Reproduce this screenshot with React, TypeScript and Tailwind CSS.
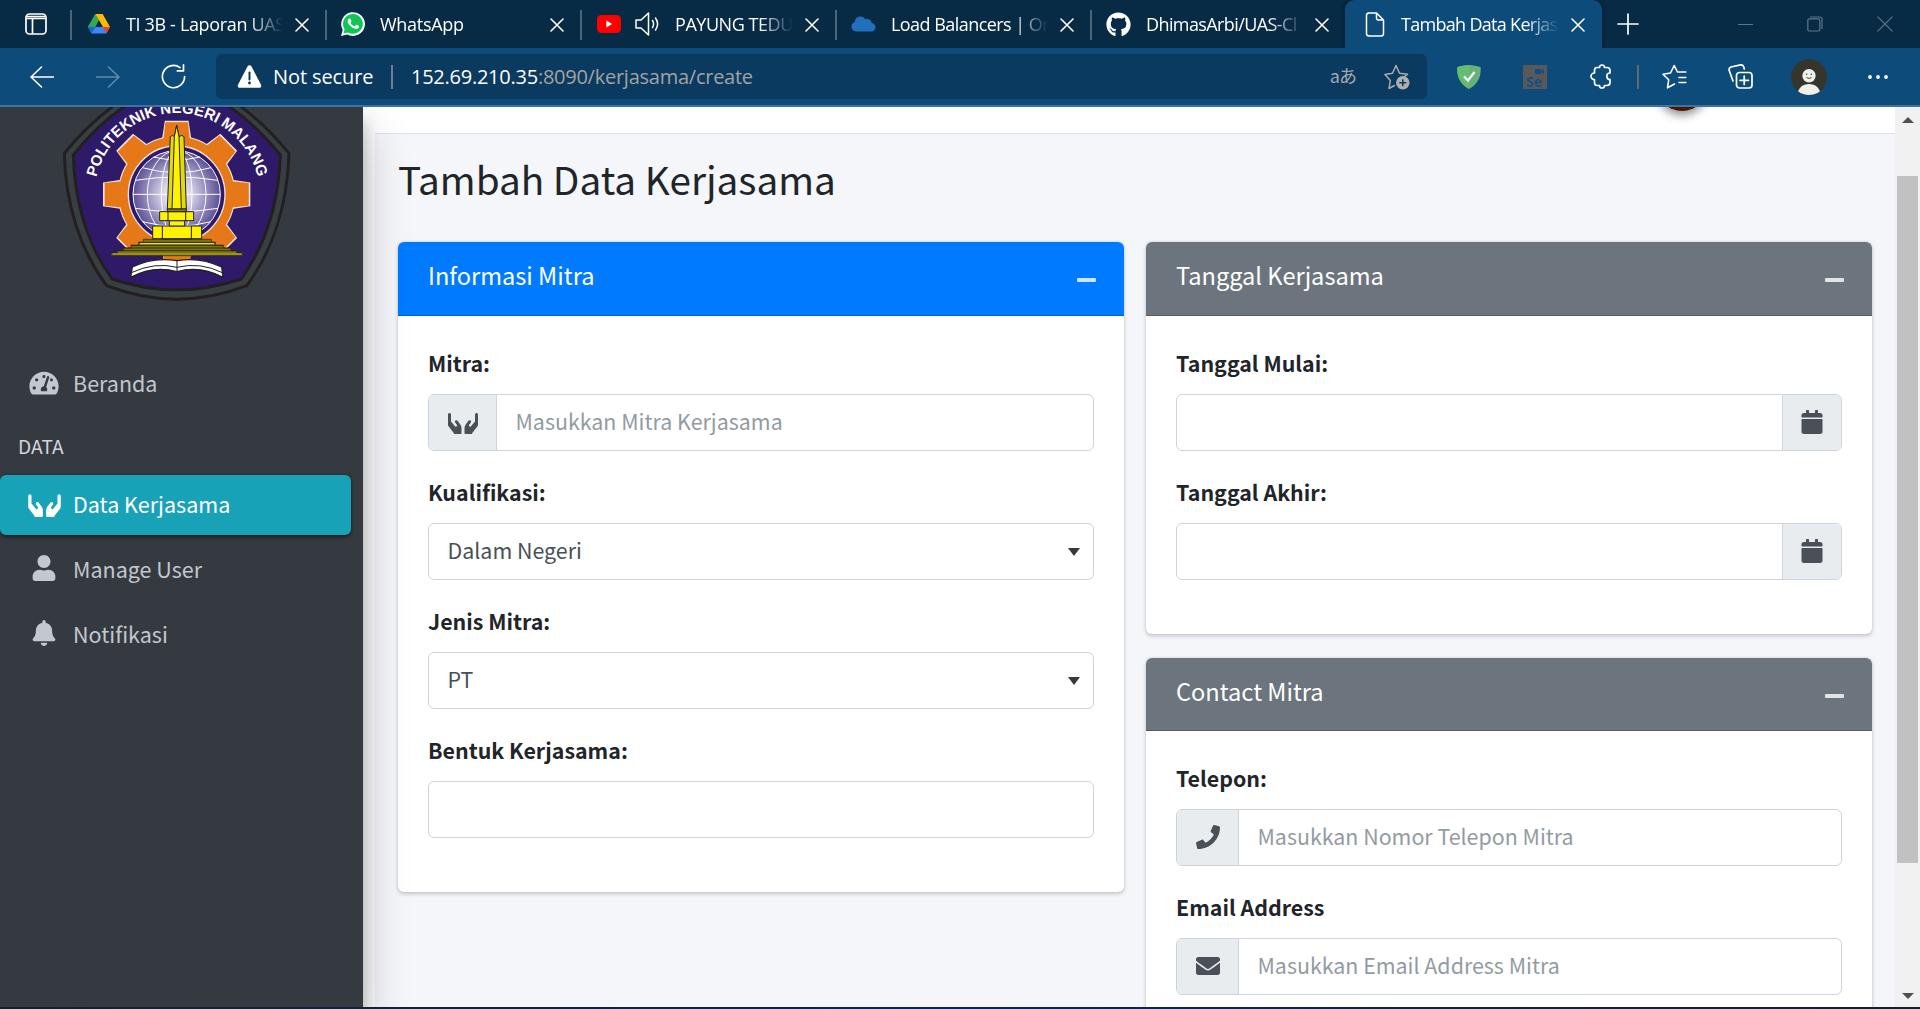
import React from "react";
import type { ReactNode } from "react";
import {
  FaTachometerAlt,
  FaHands,
  FaUser,
  FaBell,
  FaCalendar,
  FaPhone,
  FaEnvelope,
  FaGithub,
} from "react-icons/fa";

/* ---------- Browser chrome icons ---------- */

function Stroke({ w, h, vb, sw = 1.5, className = "", children }: { w: number; h: number; vb: string; sw?: number; className?: string; children: ReactNode }) {
  return (
    <svg width={w} height={h} viewBox={vb} fill="none" stroke="currentColor" strokeWidth={sw} strokeLinecap="round" strokeLinejoin="round" className={"shrink-0 " + className}>
      {children}
    </svg>
  );
}

function CloseX() {
  return (
    <Stroke w={14} h={14} vb="0 0 14 14" sw={1.6} className="text-white">
      <path d="M1 1l12 12M13 1L1 13" />
    </Stroke>
  );
}

function DriveLogo() {
  return (
    <svg width="22" height="20" viewBox="0 0 22 20" className="shrink-0">
      <path d="M7.3 0H14.7L11 6.4Z" fill="#188038" />
      <path d="M7.3 0L0 12.8L3.7 19.4L11 6.5Z" fill="#1ea362" />
      <path d="M14.7 0L7.3 0L14.8 13H22Z" fill="#ffba00" />
      <path d="M7.3 0L11 6.5L7.3 13H0Z" fill="#34a853" />
      <path d="M0 13H22L18.3 19.6H3.7Z" fill="#4285f4" />
      <path d="M0 13L3.7 19.6L7.4 13Z" fill="#1967d2" />
      <path d="M22 13L18.3 19.6L14.6 13Z" fill="#ea4335" />
      <path d="M11 6.5L14.7 13H7.3Z" fill="#072a45" />
    </svg>
  );
}

function WhatsAppLogo() {
  return (
    <svg width="24" height="24" viewBox="0 0 24 24" className="shrink-0">
      <path d="M0 24l1.7-6.1A11.9 11.9 0 1 1 6.2 22.4Z" fill="#fff" />
      <path d="M2.4 21.6l1.2-4.3A9.9 9.9 0 1 1 7 20.5Z" fill="#11c456" />
      <path d="M8.6 6.4c.4 0 .7 0 .9.5l.9 2.1c.1.3 0 .6-.9 1.7 1 1.800 2.300 2.900 4.100 3.700l1.200-1.400c.2-.3.500-.3.800-.2l2.100 1c.4.2.4.4.3 1-.3 1.400-1.600 2.200-2.900 2.200-1 0-3.300-.8-5.100-2.400-1.900-1.700-3.300-3.900-3.400-5.200 0-1.500.9-3 2-3Z" fill="#fff" />
    </svg>
  );
}

function YouTubeLogo() {
  return (
    <svg width="24" height="18" viewBox="0 0 24 18" className="shrink-0">
      <rect width="24" height="18" rx="4.500" fill="#f00" />
      <path d="M9.300 5.400V12.600L15.300 9Z" fill="#fff" />
    </svg>
  );
}

function OracleCloud() {
  return (
    <svg width="25" height="16" viewBox="0 0 25 16" className="shrink-0">
      <path d="M5.500 15.500C2.500 15.500.500 13.300.500 10.600.500 8 2.300 6.300 3.800 6 4 2.700 6.400.500 9.400.500c2.200 0 4 1.200 4.900 2.700C17.600 2.200 20.500 4 20.800 7c2.400.4 3.700 2.200 3.700 4.200 0 2.500-1.700 4.300-4.300 4.300Z" fill="#2170bd" />
    </svg>
  );
}

function Favicon({ kind }: { kind: string }) {
  if (kind === "drive") return <DriveLogo />;
  if (kind === "whatsapp") return <WhatsAppLogo />;
  if (kind === "oracle") return <OracleCloud />;
  if (kind === "youtube")
    return (
      <>
        <YouTubeLogo />
        <Stroke w={27} h={26} vb="0 0 27 26" sw={1.5} className="ml-[14px] text-white">
          <path d="M1 9h5l7.500-7v22L6 17H1Z" />
          <path d="M17.500 9.500q2.200 3.500 0 7M20.500 7q4.200 6 0 12" />
        </Stroke>
      </>
    );
  if (kind === "github") return <FaGithub className="size-[25px] shrink-0 text-white" />;
  return (
    <Stroke w={20} h={25} vb="0 0 20 25" sw={1.500} className="ml-[2px] mr-[2px] text-white">
      <path d="M3 1H11.500L18.500 8V21.500Q18.500 24 16 24H4Q1.500 24 1.500 21.500V3.500Q1.500 1 4 1M11.500 1V6Q11.500 8 13.500 8H18.500" />
    </Stroke>
  );
}

type Tab = { kind: string; title: string; pad: string; gap: string; box: string };

const tabs: Tab[] = [
  { kind: "drive", title: "TI 3B - Laporan UAS", pad: "pl-[18px]", gap: "ml-[16px]", box: "tracking-[-0.35px]" },
  { kind: "whatsapp", title: "WhatsApp", pad: "pl-[16px]", gap: "ml-[15px]", box: "tracking-[-0.3px]" },
  { kind: "youtube", title: "PAYUNG TEDUH", pad: "pl-[17px]", gap: "ml-[13px]", box: "tracking-[-0.45px]" },
  { kind: "oracle", title: "Load Balancers | Ora", pad: "pl-[16px]", gap: "ml-[15px]", box: "tracking-[-0.55px]" },
  { kind: "github", title: "DhimasArbi/UAS-Cl", pad: "pl-[16px]", gap: "ml-[15px]", box: "tracking-[-0.6px]" },
];

function TabTitle({ title, box }: { title: string; box: string }) {
  return (
    <span className={"min-w-0 flex-1 overflow-hidden whitespace-nowrap pb-[1px] text-[18px] leading-[30px] text-white [mask-image:linear-gradient(to_right,black_calc(100%-34px),transparent)] " + box}>
      {title}
    </span>
  );
}

function TabBar() {
  return (
    <div className="flex h-[48px] shrink-0 items-stretch bg-[#072a45]">
      <div className="flex w-[70px] items-center pl-[25px]">
        <Stroke w={22} h={22} vb="0 0 22 22" sw={1.700} className="text-white">
          <rect x="1" y="1" width="20" height="20" rx="3.500" />
          <path d="M1.500 5.500H20.500M2 3.500H20M7.500 6V20.500" />
        </Stroke>
      </div>
      {tabs.map((t) => (
        <div key={t.kind} className={"relative flex w-[255px] items-center pr-[16px] " + t.pad}>
          <span className="absolute left-0 top-[10px] h-[30px] w-[2px] bg-[#4a6478]" />
          <Favicon kind={t.kind} />
          <div className={"flex min-w-0 flex-1 " + t.gap}>
            <TabTitle title={t.title} box={t.box} />
          </div>
          <div className="ml-[12px] flex pt-[2px]"><CloseX /></div>
        </div>
      ))}
      <div className="flex w-[257px] items-center rounded-t-[9px] bg-[#0d4b7a] pl-[18px] pr-[17px] shadow-[0_0_4px_rgba(0,0,0,0.5)]">
        <Favicon kind="page" />
        <div className="ml-[14px] flex min-w-0 flex-1">
          <TabTitle title="Tambah Data Kerjasama" box="tracking-[-0.7px]" />
        </div>
        <div className="ml-[12px] flex pt-[2px]"><CloseX /></div>
      </div>
      <div className="flex flex-1 items-center justify-between pl-[15px] pr-[27px]">
        <Stroke w={22} h={22} vb="0 0 22 22" sw={1.700} className="text-white">
          <path d="M11 1V21M1 11H21" />
        </Stroke>
        <div className="flex items-center gap-[54px] text-[#5f7587]">
          <Stroke w={15} h={16} vb="0 0 15 16" sw={1}><path d="M0 8.500H15" /></Stroke>
          <Stroke w={16} h={16} vb="0 0 16 16" sw={1.200}>
            <rect x="0.800" y="2.800" width="12" height="12.200" rx="1.500" />
            <path d="M3.500 1H13Q15 1 15 3V12.500" />
          </Stroke>
          <Stroke w={16} h={16} vb="0 0 16 16" sw={1.200}><path d="M0.800 0.800l14.400 14.400M15.200 0.800L0.800 15.200" /></Stroke>
        </div>
      </div>
    </div>
  );
}

function Toolbar() {
  return (
    <div className="flex h-[59px] shrink-0 items-center border-b-2 border-[#3f739e] bg-[#0d4b7a] pl-[30px] text-white">
      <Stroke w={24} h={22} vb="0 0 24 22" sw={1.600}><path d="M11.500 1L1 11L11.500 21M1.500 11H23.500" /></Stroke>
      <Stroke w={24} h={22} vb="0 0 24 22" sw={1.600} className="ml-[42px] text-[#6289a8]"><path d="M12.500 1L23 11L12.500 21M22.500 11H0.500" /></Stroke>
      <Stroke w={25} h={25} vb="0 0 25 25" sw={1.700} className="ml-[41px]">
        <path d="M23.600 12.500A11.100 11.100 0 1 1 19 3.600M22.500 0.900V6.800H16.300" />
      </Stroke>
      <div className="ml-[30px] flex h-[45px] w-[1211px] items-center rounded-[6px] bg-[#0a3a5f] pl-[21px] pr-[17px]">
        <svg width="25" height="23" viewBox="0 0 25 23" className="shrink-0">
          <path d="M10.600 1.300a2.200 2.200 0 0 1 3.800 0l9.600 18.500c.8 1.500-.1 3-1.800 3H2.800c-1.700 0-2.600-1.500-1.800-3Z" fill="#fff" />
          <path d="M12.500 7.500V14.500" stroke="#0a3a5f" strokeWidth="2" strokeLinecap="round" />
          <circle cx="12.500" cy="18" r="1.400" fill="#0a3a5f" />
        </svg>
        <span className="ml-[11px] w-[101px] whitespace-nowrap text-[20px] leading-[28px] tracking-[-0.1px]">Not secure</span>
        <span className="ml-[17px] h-[24px] w-[2px] bg-[#6b8193]" />
        <span className="ml-[18px] whitespace-nowrap text-[20px] leading-[28px] tracking-[-0.25px]">
          152.69.210.35<span className="text-[#a3a3a3]">:8090/kerjasama/create</span>
        </span>
        <span className="ml-auto pb-[3px] font-['Noto_Sans_CJK_JP',sans-serif] text-[18px] leading-[24px] tracking-[-1px] text-[#a3a8ab]">aあ</span>
        <svg width="26" height="26" viewBox="0 0 26 26" className="ml-[28px] shrink-0" fill="none">
          <path d="M10.500 21.500L5 24.500L6.300 16.500L1 10.500L8.500 9.200L12 1.500L15.500 9.200L23.500 10.300L20.500 12.500" stroke="#a9adaf" strokeWidth="1.500" strokeLinejoin="round" strokeLinecap="round" />
          <circle cx="18.800" cy="18.800" r="6.700" fill="#b0b0b0" />
          <path d="M18.800 15.300V22.300M15.300 18.800H22.300" stroke="#0a3a5f" strokeWidth="1.500" />
        </svg>
      </div>
      <svg width="24" height="24" viewBox="0 0 24 24" className="ml-[30px] shrink-0">
        <path d="M12 0C8.500 0 4 1 .300 2.200 0 10 1.500 18 12 24 22.500 18 24 10 23.700 2.200 20 1 15.500 0 12 0Z" fill="#67b279" />
        <path d="M12 0C8.500 0 4 1 .300 2.200 0 10 1.500 18 12 24Z" fill="#68bc71" />
        <path d="M7 11.500L11 15.500L17.500 7" stroke="#fff" strokeWidth="2.200" fill="none" />
      </svg>
      <div className="ml-[42px] flex h-[24px] w-[24px] shrink-0 flex-col items-end justify-between bg-[#57585a]">
        <svg width="9" height="5" viewBox="0 0 9 5" className="mr-[3px] mt-[4px]"><path d="M0 0H6V1.500L9 0V5L6 3.500V5H0Z" fill="#14507f" /></svg>
        <span className="mb-[1px] mr-[5px] text-[14px] font-bold leading-[13px] text-[#14507f]">Se</span>
      </div>
      <Stroke w={24} h={25} vb="0 0 24 25" sw={1.700} className="ml-[43px]">
        <path d="M7 3.500H9.500C9.500 2 10.500 1 12 1S14.500 2 14.500 3.500H17Q20 3.500 20 6.500V9C18 9 16.800 10.500 16.800 12.200S18 15.500 20 15.500V18.500Q20 21.500 17 21.500H14.500C14.500 23 13.500 24 12 24S9.500 23 9.500 21.500H7Q4.500 21.500 4.500 18.500V15.500C2.500 15.500 1 14 1 12.300S2.500 9 4.500 9V6.500Q4.500 3.500 7 3.500Z" />
      </Stroke>
      <span className="ml-[23px] h-[24px] w-[2px] shrink-0 bg-[#66696c]" />
      <Stroke w={25} h={25} vb="0 0 25 25" sw={1.600} className="ml-[23px]">
        <path d="M12.500 20L5.500 23.800L6.700 15.800L1 10.200L8.500 9L12.200 1.500L15.500 8H23.800M17 13.500H23.800M17 18.500H23.800" />
      </Stroke>
      <Stroke w={25} h={25} vb="0 0 25 25" sw={1.700} className="ml-[41px]">
        <rect x="8.500" y="8.500" width="15.500" height="15.500" rx="3" />
        <path d="M16.200 12V20.500M12 16.300H20.500M5 17L1.200 6.500Q.500 4 3 3L12.500.9Q15 .500 15.800 3L16.300 5" />
      </Stroke>
      <svg width="36" height="36" viewBox="0 0 36 36" className="ml-[38px] shrink-0">
        <circle cx="18" cy="18" r="18" fill="#35352b" />
        <path d="M7 32.200Q10 25 18 25T29 32.200A18 18 0 0 1 7 32.200Z" fill="#efefeb" />
        <circle cx="18" cy="16.700" r="6.700" fill="#efefeb" />
        <circle cx="15.700" cy="15.300" r="0.700" fill="#35352b" />
        <circle cx="20.300" cy="15.300" r="0.700" fill="#35352b" />
        <path d="M15.500 18.500Q18 20.500 20.500 18.500" stroke="#35352b" strokeWidth="0.900" fill="none" />
      </svg>
      <svg width="20" height="4" viewBox="0 0 20 4" className="ml-[41px] shrink-0" fill="#fff">
        <circle cx="2" cy="2" r="1.900" /><circle cx="10" cy="2" r="1.900" /><circle cx="18" cy="2" r="1.900" />
      </svg>
    </div>
  );
}

/* ---------- Sidebar ---------- */

const TEETH = [0, 45, 90, 135, 180, 225, 270, 315];

function CampusLogo() {
  return (
    <svg width="323" height="213" viewBox="0 51 969 639" className="ml-[40px] block shrink-0">
      <defs>
        <radialGradient id="globe">
          <stop offset="0" stopColor="#ffffff" />
          <stop offset="0.350" stopColor="#d5d0e6" />
          <stop offset="1" stopColor="#5a4f97" />
        </radialGradient>
        <path id="ring" d="M163 317A248 248 0 0 1 659 317" />
      </defs>
      <path d="M73 190Q220 10 410 -50Q600 10 747 190C742 340 700 480 620 587Q410 668 200 587C120 480 76 340 73 190Z" fill="#383f42" stroke="#231f20" strokeWidth="9" />
      <path d="M100 195Q235 25 410 -25Q585 25 721 195C716 340 680 460 604 567Q410 632 216 567C140 460 104 340 100 195Z" fill="#2e1a69" stroke="#231f20" strokeWidth="9" />
      <text fill="#fff" fontSize="46" fontWeight="bold" fontFamily="'Liberation Sans', Arial, sans-serif">
        <textPath href="#ring" startOffset="50%" textAnchor="middle" textLength="668" lengthAdjust="spacingAndGlyphs">POLITEKNIK NEGERI MALANG</textPath>
      </text>
      <g transform="translate(410 313)">
        {TEETH.map((a) => (
          <path key={a} d="M-41 -165L-33 -218H33L41 -165Z" transform={`rotate(${a})`} fill="#e77817" stroke="#f3e3e0" strokeWidth="6" />
        ))}
        <circle r="173" fill="none" stroke="#f3e3e0" strokeWidth="6" />
        {TEETH.map((a) => (
          <path key={a} d="M-41 -150L-34 -216H34L41 -150Z" transform={`rotate(${a})`} fill="#e77817" />
        ))}
        <circle r="173" fill="#e77817" />
        <circle r="145" fill="#2e1a69" stroke="#f3e3e0" strokeWidth="4" />
        <circle r="131" fill="url(#globe)" stroke="#fff" strokeWidth="3" />
        <g fill="none" stroke="#fff" strokeWidth="3">
          <ellipse rx="88" ry="131" />
          <ellipse rx="46" ry="131" />
          <path d="M-131 0H131M-123 -42Q0 -62 123 -42M-103 -80Q0 -50 103 -80M-70 -112Q0 -95 70 -112M-124 42Q0 62 124 42M-103 82Q0 110 103 82" />
        </g>
      </g>
      <path d="M370 498H452V506Q430 506 411 512Q390 506 370 506Z" fill="#e77817" />
      <g stroke="#231f20" strokeWidth="3" strokeLinejoin="round">
        <path d="M310 448H514V457H526V466H550V474H573V482H590V489H608V497H213V489H232V482H250V474H273V466H296V457H310Z" fill="#7d740f" strokeWidth="2" />
        <path d="M296 457H526M273 466H550M250 474H573M232 482H590" fill="none" strokeWidth="2.500" />
        <path d="M218 492H604" stroke="#a89d12" strokeWidth="4" />
        <path d="M300 461H522" stroke="#e6dc10" strokeWidth="4" />
        <path d="M338 408H485V446H338Z" fill="#fff200" />
        <path d="M367 408V446M454 408V446" fill="none" />
        <path d="M388 392H434V408H388Z" fill="#fff200" />
        <path d="M359 365H461V392H359Z" fill="#fff200" />
        <path d="M384 362V392M437 362V392" fill="none" />
        <path d="M382 357L391 140L398 136L403 140L410 106L417 140L425 136L432 140L439 357Z" fill="#e3d90d" />
        <path d="M403 140L410 106L417 140L424 357H396Z" fill="#fff200" strokeWidth="3" />
        <path d="M382 357H439V365H382Z" fill="#8a800f" />
        <path d="M277 531Q340 500 411 512Q480 500 545 531L549 562Q480 525 411 545Q340 525 272 562Z" fill="#fff" strokeWidth="4" />
        <path d="M411 512V545M274 548Q345 515 411 532Q480 515 547 548" fill="none" strokeWidth="3" />
      </g>
    </svg>
  );
}

function NavItem({ icon, label, active = false }: { icon: ReactNode; label: string; active?: boolean }) {
  return (
    <div className={"flex h-[60px] w-[351px] shrink-0 items-center pl-[24px] text-[21.5px] leading-[32px] " + (active ? "rounded-[6px] bg-[#18a2b8] text-white shadow-[0_1.5px_4.5px_rgba(0,0,0,0.24),0_1.5px_3px_rgba(0,0,0,0.3)]" : "text-[#c2c7d0]")}>
      <span className="flex w-[40px] shrink-0 justify-center">{icon}</span>
      <span className="ml-[9px] pb-[3px]">{label}</span>
    </div>
  );
}

function Sidebar() {
  return (
    <aside className="relative z-10 flex w-[363px] shrink-0 flex-col bg-[#353a40] shadow-[0_21px_42px_rgba(0,0,0,0.25),0_15px_15px_rgba(0,0,0,0.22)]">
      <CampusLogo />
      <nav className="mt-[34px] flex flex-col gap-[5px]">
        <div>
          <NavItem icon={<FaTachometerAlt className="mb-[3px] h-[26px] w-[30px]" />} label="Beranda" />
          <div className="h-[56px] pl-[18px] pt-[18px] text-[19.200px] leading-[28px] text-[#d0d4db]">DATA</div>
        </div>
        <NavItem active icon={<FaHands className="mb-[2px] h-[26px] w-[33px] shrink-0" />} label="Data Kerjasama" />
        <NavItem icon={<FaUser className="mb-[4px] h-[26px] w-[24px]" />} label="Manage User" />
        <NavItem icon={<FaBell className="mb-[4px] h-[26px] w-[24px]" />} label="Notifikasi" />
      </nav>
    </aside>
  );
}

/* ---------- Form cards ---------- */

function Card({ title, header, height, children }: { title: string; header: string; height: string; children: ReactNode }) {
  return (
    <section className={"flex shrink-0 flex-col overflow-hidden rounded-[6px] bg-white shadow-[0_0_1.5px_rgba(0,0,0,0.125),0_1.5px_4.500px_rgba(0,0,0,0.2)] " + height}>
      <header className={"flex shrink-0 items-center justify-between border-b border-black/20 pl-[30px] pr-[28px] text-white " + header}>
        <h3 className="pb-[7px] text-[23.600px] leading-[30px]">{title}</h3>
        <span className="mt-[3px] h-[4px] w-[19px] rounded-[1px] bg-white/80" />
      </header>
      <div className="flex flex-col gap-[24px] px-[30px] pt-[30px]">{children}</div>
    </section>
  );
}

function Field({ label, placeholder, value, prepend, append, prependWidth = "w-[62px]" }: { label: string; placeholder?: string; value?: string; prepend?: ReactNode; append?: ReactNode; prependWidth?: string }) {
  return (
    <div>
      <label className="flex h-[48px] items-start text-[21.400px] font-bold leading-[34px] text-[#212529]">{label}</label>
      <div className="flex h-[57px] items-stretch overflow-hidden rounded-[6px] border-[1.500px] border-[#ced4da] bg-white">
        {prepend && <span className={"flex items-center justify-center border-r border-[#ced4da] bg-[#e9ecef] pb-[2px] text-[#495057] " + prependWidth}>{prepend}</span>}
        <div className="flex flex-1 items-center justify-between pb-[3px] pl-[18.500px] pr-[13px] text-[21.400px] leading-[32px]">
          {placeholder && <span className="text-[#939ba2]">{placeholder}</span>}
          {value && <span className="text-[#495057]">{value}</span>}
          {value && (
            <svg width="12" height="8" viewBox="0 0 12 8" className="mt-[4px]"><path d="M0 0H12L6 8Z" fill="#343a40" /></svg>
          )}
        </div>
        {append && <span className="flex w-[59px] items-center justify-center border-l border-[#ced4da] bg-[#e9ecef] pb-[2px] text-[#495057]">{append}</span>}
      </div>
    </div>
  );
}

function Content() {
  const calendar = <FaCalendar className="size-[24px]" />;
  return (
    <main className="ml-[12px] flex min-w-0 flex-1 flex-col bg-[#f4f6f9]">
      <div className="flex h-[27px] shrink-0 items-start justify-end overflow-hidden border-b border-[#dee2e6] bg-white pr-[188px]">
        <span className="-mt-[46px] size-[50px] shrink-0 rounded-full bg-[#4a1600] shadow-[0_4px_10px_rgba(0,0,0,0.45)]" />
      </div>
      <div className="px-[23px]">
        <h1 className="h-[108px] pt-[19px] text-[38.700px] leading-[50px] text-[#212529]">Tambah Data Kerjasama</h1>
        <div className="grid grid-cols-[726px_726px] items-start gap-[22px]">
          <Card title="Informasi Mitra" header="h-[74px] bg-[#007bff]" height="h-[650px]">
            <Field label="Mitra:" placeholder="Masukkan Mitra Kerjasama" prepend={<FaHands className="h-[24px] w-[30px]" />} prependWidth="w-[68px]" />
            <Field label="Kualifikasi:" value="Dalam Negeri" />
            <Field label="Jenis Mitra:" value="PT" />
            <Field label="Bentuk Kerjasama:" />
          </Card>
          <div className="flex flex-col gap-[24px]">
            <Card title="Tanggal Kerjasama" header="h-[74px] bg-[#6c757d]" height="h-[392px]">
              <Field label="Tanggal Mulai:" append={calendar} />
              <Field label="Tanggal Akhir:" append={calendar} />
            </Card>
            <Card title="Contact Mitra" header="h-[73px] bg-[#6c757d]" height="h-[420px]">
              <Field label="Telepon:" placeholder="Masukkan Nomor Telepon Mitra" prepend={<FaPhone className="size-[24px]" />} />
              <Field label="Email Address" placeholder="Masukkan Email Address Mitra" prepend={<FaEnvelope className="size-[24px]" />} />
            </Card>
          </div>
        </div>
      </div>
    </main>
  );
}

function ScrollBar() {
  return (
    <div className="relative z-20 flex w-[25px] shrink-0 flex-col items-center bg-[#f1f1f1]">
      <svg width="12" height="6" viewBox="0 0 12 6" className="mt-[10px]"><path d="M0 6H12L6 0Z" fill="#505050" /></svg>
      <span className="mt-[53px] h-[687px] w-[21px] bg-[#c1c1c1]" />
      <svg width="12" height="6" viewBox="0 0 12 6" className="mb-[8px] mt-auto"><path d="M0 0H12L6 6Z" fill="#505050" /></svg>
    </div>
  );
}

export default function App() {
  return (
    <div className="flex h-[1009px] w-[1920px] flex-col overflow-hidden bg-white font-['Open_Sans',sans-serif]">
      <TabBar />
      <Toolbar />
      <div className="flex min-h-0 flex-1 overflow-hidden font-['Noto_Sans_CJK_SC',sans-serif]">
        <Sidebar />
        <Content />
        <ScrollBar />
      </div>
      <div className="relative z-30 h-[2px] shrink-0 bg-linear-to-r from-[#1b1d28] via-[#14205a] to-[#1b1d28]" />
    </div>
  );
}
